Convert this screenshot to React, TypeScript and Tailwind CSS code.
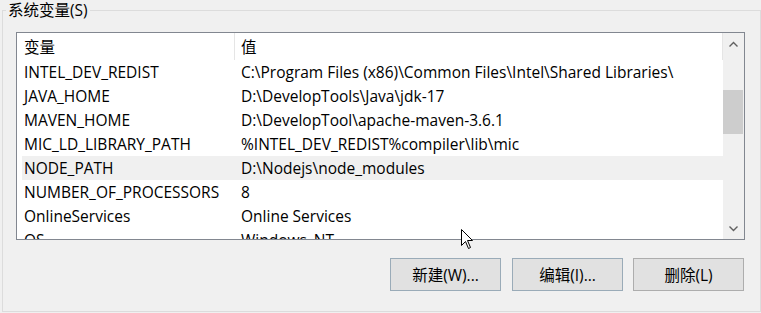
import React from "react";

const rows: [string, string][] = [
  ["INTEL_DEV_REDIST", "C:\\Program Files (x86)\\Common Files\\Intel\\Shared Libraries\\"],
  ["JAVA_HOME", "D:\\DevelopTools\\Java\\jdk-17"],
  ["MAVEN_HOME", "D:\\DevelopTool\\apache-maven-3.6.1"],
  ["MIC_LD_LIBRARY_PATH", "%INTEL_DEV_REDIST%compiler\\lib\\mic"],
  ["NODE_PATH", "D:\\Nodejs\\node_modules"],
  ["NUMBER_OF_PROCESSORS", "8"],
  ["OnlineServices", "Online Services"],
  ["OS", "Windows_NT"],
];

const font = { fontFamily: '"Open Sans", "Noto Sans CJK SC", sans-serif' };

export default function App() {
  return (
    <div
      className="w-[761px] h-[313px] bg-[#f0f0f0] overflow-hidden text-[15.5px] text-black relative"
      style={font}
    >
      <div className="ml-[2px] mt-[10px] w-[759px] h-[302px] border border-[#dcdcdc] relative pl-[13px] pt-[21px]">
        <div className="absolute left-[3px] top-[-12px] px-[2px] bg-[#f0f0f0] leading-[22px]">
          系统变量(S)
        </div>
        <div className="w-[729px] h-[208px] border border-[#828790] bg-white flex overflow-hidden">
          <div className="w-[706px] h-full flex flex-col overflow-hidden">
            <div className="h-[27px] flex shrink-0 items-center">
              <div className="w-[217px] pl-[7px] pt-[2px] h-full flex items-center">变量</div>
              <div className="w-px h-full bg-[#e5e5e5]" />
              <div className="flex-1 pl-[6px] pt-[2px] h-full flex items-center">值</div>
              <div className="w-px h-full bg-[#e5e5e5]" />
            </div>
            {rows.map(([k, v], i) => (
              <div
                key={k}
                className={
                  "h-[24px] shrink-0 ml-[5px] pl-[2px] pt-[2px] flex items-center whitespace-nowrap " +
                  (i === 4 ? "bg-[#f0f0f0]" : "")
                }
              >
                <div className="w-[217px] shrink-0">{k}</div>
                <div>{v}</div>
              </div>
            ))}
          </div>
          <div className="w-[21px] h-full bg-[#f0f0f0] flex flex-col">
            <div className="h-[21px] flex items-center justify-center">
              <svg width="9" height="6" viewBox="0 0 9 6">
                <path d="M0.5 5.5 L4.5 1.5 L8.5 5.5" fill="none" stroke="#606060" strokeWidth="1.4" />
              </svg>
            </div>
            <div className="h-[36px]" />
            <div className="h-[44px] w-[20px] bg-[#cdcdcd]" />
            <div className="flex-1" />
            <div className="h-[21px] flex items-center justify-center">
              <svg width="9" height="6" viewBox="0 0 9 6">
                <path d="M0.5 0.5 L4.5 4.5 L8.5 0.5" fill="none" stroke="#606060" strokeWidth="1.4" />
              </svg>
            </div>
          </div>
        </div>
        <div className="flex mt-[18px] ml-[374px]">
          <button className="w-[111px] h-[33px] pt-[2px] bg-[#e1e1e1] border border-[#9aabb8] flex items-center justify-center">
            新建(W)...
          </button>
          <button className="ml-[11px] w-[111px] h-[33px] pt-[2px] bg-[#e1e1e1] border border-[#9aabb8] flex items-center justify-center">
            编辑(I)...
          </button>
          <button className="ml-[10px] w-[111px] h-[33px] pt-[2px] bg-[#e1e1e1] border border-[#adadad] flex items-center justify-center">
            删除(L)
          </button>
        </div>
      </div>
      <svg className="absolute left-[461px] top-[229px]" width="13" height="21" viewBox="0 0 13 21">
        <path d="M0.5 0.5 L0.5 16.5 L4.5 12.5 L7.5 19.5 L9.5 18.5 L6.5 11.5 L11.5 11.5 Z" fill="white" stroke="black" strokeWidth="1" />
      </svg>
    </div>
  );
}
